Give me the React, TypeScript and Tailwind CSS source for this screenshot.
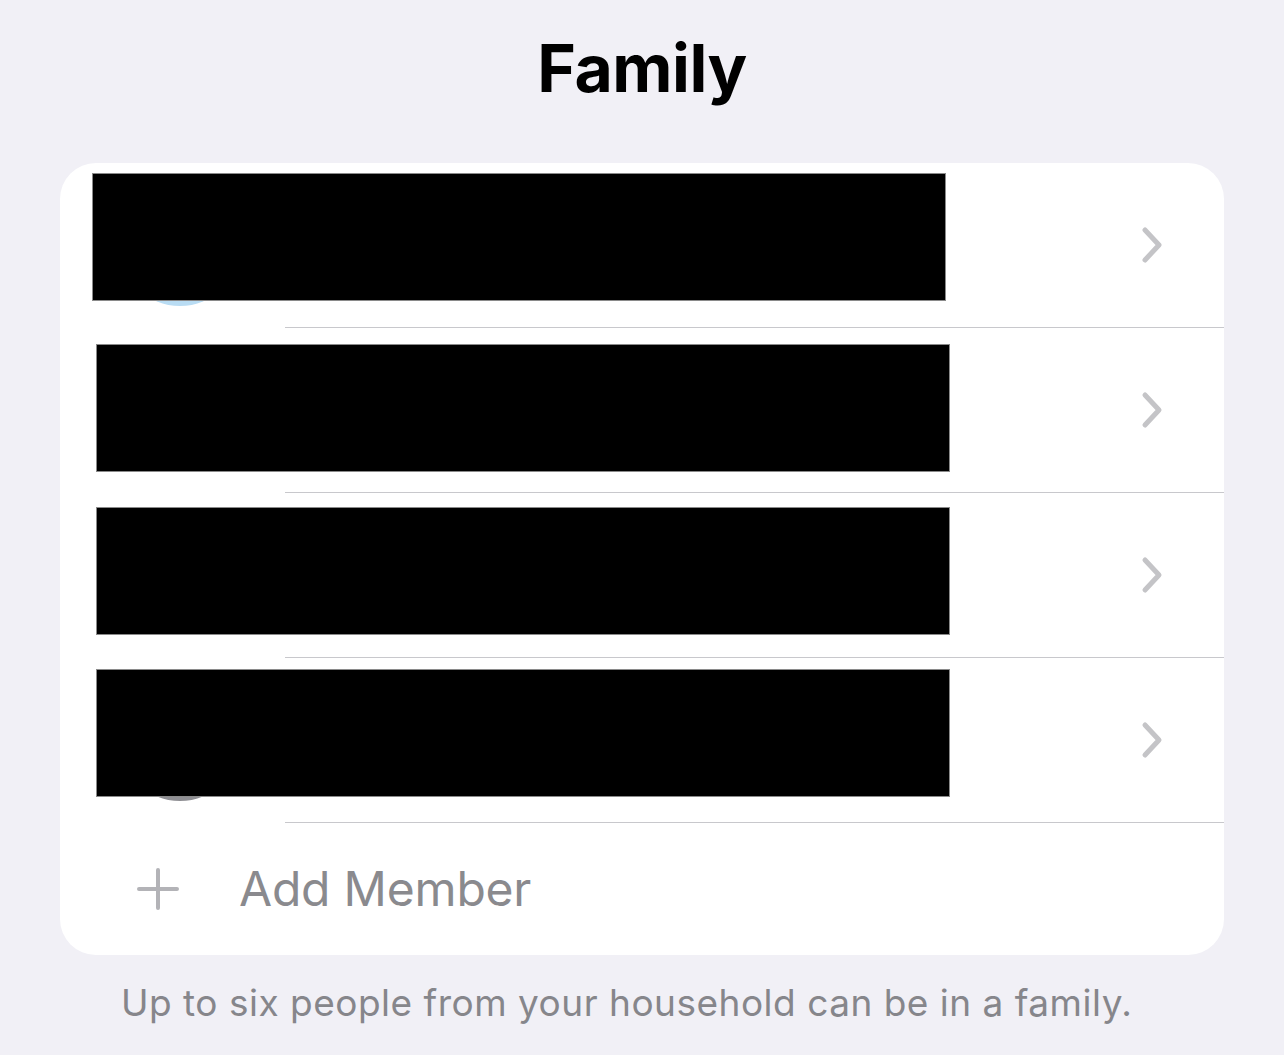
import React from "react";

const Chevron = () => (
  <svg width="24" height="38" viewBox="0 0 24 38" fill="none">
    <path d="M5 4 L19 19 L5 34" stroke="#c4c4c7" strokeWidth="5" strokeLinecap="round" strokeLinejoin="round" />
  </svg>
);

const rows = [
  { avatar: "bg-[#b9dcf3]", box: "left-[32px] top-[10px]" },
  { avatar: "bg-transparent", box: "left-[36px] top-[16px]" },
  { avatar: "bg-transparent", box: "left-[36px] top-[14px]" },
  { avatar: "bg-[#8e8e93]", box: "left-[36px] top-[11px]" },
];

export default function App() {
  return (
    <div
      className="w-[1284px] h-[1055px] bg-[#f1f0f6] overflow-hidden"
      style={{ fontFamily: 'Inter, "Noto Sans", sans-serif' }}
    >
      <div className="h-[163px] flex justify-center pt-[28px]">
        <h1 className="text-[66px] leading-[80px] font-bold text-black tracking-[-0.5px]">Family</h1>
      </div>
      <div className="mx-[60px] bg-white rounded-[36px] overflow-hidden">
        {rows.map((r, i) => (
          <div key={i} className="relative flex h-[165px]">
            <div className="w-[225px] flex items-center pl-[60px]">
              <div className={`w-[120px] h-[120px] rounded-full ${r.avatar}`} />
            </div>
            <div className="flex-1 flex items-center justify-end pr-[60px] border-b border-[#c8c8cc]">
              <Chevron />
            </div>
            <div className={`absolute ${r.box} w-[854px] h-[128px] bg-black border border-[#8a8a8a]`} />
          </div>
        ))}
        <div className="flex items-center h-[132px]">
          <div className="w-[179px] flex justify-center pl-[16px]">
            <svg width="44" height="44" viewBox="0 0 44 44">
              <path d="M22 3 V41 M3 22 H41" stroke="#b3b3b7" strokeWidth="4" strokeLinecap="round" />
            </svg>
          </div>
          <span className="text-[48px] text-[#8a8a8e] tracking-[-0.2px]">Add Member</span>
        </div>
      </div>
      <div className="pl-[121px] pt-[20px]">
        <p className="text-[37px] text-[#86868b] tracking-[0.5px]">Up to six people from your household can be in a family.</p>
      </div>
    </div>
  );
}
